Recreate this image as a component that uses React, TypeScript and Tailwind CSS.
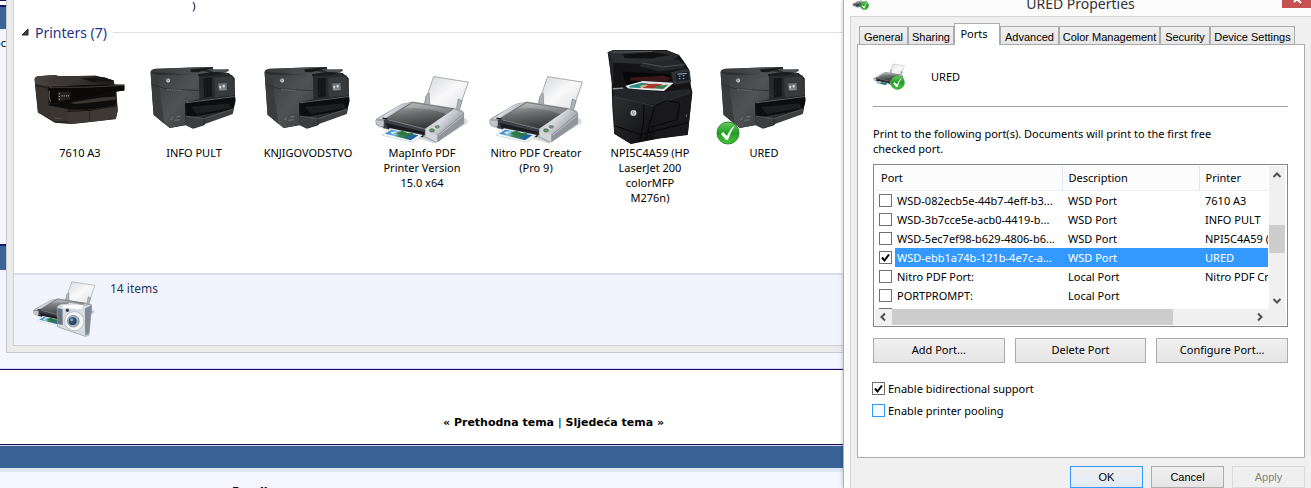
import React, { useState } from 'react';

interface Device {
  name: string;
  icon: React.ReactNode;
  isDefault?: boolean;
}

interface Port {
  port: string;
  description: string;
  printer: string;
}

const HpLogo: React.FC<{ x: number; y: number; r: number }> = ({ x, y, r }) => (
  <g>
    <circle cx={x} cy={y} r={r} fill="#d5d8da" />
    <path d={`M${x - 1} ${y - r + 1}l-3 ${r * 1.3}M${x + 3} ${y - 3}l-3 ${r}`} stroke="#3d3f41" strokeWidth="1.5" />
  </g>
);

const WidePrinter: React.FC = () => (
  <svg viewBox="104 218 276 154" className="h-[51px] w-[92px]" aria-hidden="true">
    <defs>
      <linearGradient id="wideTop" x1="0" y1="0" x2="1" y2="0">
        <stop offset="0" stopColor="#4a4542" />
        <stop offset="0.6" stopColor="#332f2c" />
        <stop offset="1" stopColor="#1b1817" />
      </linearGradient>
    </defs>
    <path d="M105 234Q106 226 116 225L165 221L180 225L290 223L344 238L346 250L376 251L376 268L352 269L356 328L350 354L272 363L214 369L166 365L115 334L112 300Z" fill="#25211f" />
    <path d="M105 234Q106 226 116 225L165 221L180 225L290 223L344 238L330 250L146 256L106 248Z" fill="url(#wideTop)" />
    <path d="M182 226l86-1-40 16-62 4-26-4Z" fill="#3b3734" />
    <path d="M244 231l72-3 26 10-60 5Z" fill="#171413" />
    <path d="M106 249L146 258V312L148 350L115 334L110 290Z" fill="#38332f" />
    <path d="M106 252l38 8" stroke="#151312" strokeWidth="2" />
    <path d="M145 257L250 252L376 250V268L346 272L310 280L214 303L152 307Q143 282 145 257Z" fill="#0b0a09" />
    <path d="M148 258L260 258L374 252" stroke="#5c5753" strokeWidth="2" fill="none" />
    <path d="M149 268q-3 18 4 33" stroke="#726c66" strokeWidth="3" fill="none" />
    <path d="M174 272l38-1v24l-36 6Z" fill="#23201e" />
    <path d="M178 278h3M178 286h3M178 294h3M187 284h3M193 284h3M200 284h3M206 284h3" stroke="#d2ccc5" strokeWidth="3" />
    <path d="M150 308L214 304L310 280L350 272V316L270 326L150 322Z" fill="#0f0d0c" />
    <path d="M214 304l86-14 50-4v10l-124 13Z" fill="#39352f" />
    <path d="M145 312L205 324V360L166 362L148 350Z" fill="#3a3531" />
    <path d="M202 330L270 326L354 312L356 328L350 354L272 363L214 369L204 362Z" fill="#3e3935" />
    <path d="M202 331L272 328L354 314" stroke="#191614" strokeWidth="3" fill="none" />
    <path d="M272 332l-1 30" stroke="#1d1a18" strokeWidth="2" />
    <path d="M164 350l22 3" stroke="#6b655f" strokeWidth="2" />
  </svg>
);

const OfficePrinter: React.FC = () => (
  <svg viewBox="449 192 264 196" className="h-[65px] w-[88px]" aria-hidden="true">
    <defs>
      <linearGradient id="officeFront" x1="0" y1="0" x2="1" y2="1">
        <stop offset="0" stopColor="#3b3d3e" />
        <stop offset="0.5" stopColor="#505254" />
        <stop offset="1" stopColor="#38393b" />
      </linearGradient>
      <linearGradient id="officeTop" x1="0" y1="0" x2="1" y2="0">
        <stop offset="0" stopColor="#36383a" />
        <stop offset="1" stopColor="#56595b" />
      </linearGradient>
    </defs>
    <path d="M450 214Q450 205 464 203L575 200L638 198L640 214L686 216L700 230L706 296L700 326L614 366L612 374L578 384L556 374L508 382L459 342Z" fill="#2b2c2e" />
    <path d="M450 212l14-8 112-5 60-1-32 12 40 8-50 6Z" fill="url(#officeTop)" />
    <path d="M470 222L596 220L598 294L554 306L556 372L508 382L488 366Z" fill="url(#officeFront)" />
    <path d="M450 214L472 222L478 268L492 370L459 342Z" fill="#3a3c3e" />
    <path d="M452 250l44 14 100 5" stroke="#242526" strokeWidth="2" fill="none" />
    <path d="M570 205l68-7-18 9-28 7-20-1Z" fill="#191a1b" />
    <path d="M592 220l92-15 2 4-30 13-60 6Z" fill="#1b1c1d" />
    <path d="M620 205h65l-6 10-40-3Z" fill="#505355" />
    <path d="M596 225l100-2 8 10v58l-106 4Z" fill="#28292b" />
    <path d="M610 233l24-2v55l-22 4Z" fill="#111213" />
    <path d="M617 236v48M626 235v48" stroke="#2b2d2e" strokeWidth="2" />
    <path d="M642 230l56-3 6 56-60 6Z" fill="#37393b" />
    <path d="M654 248l25-2 2 22-25 2Z" fill="#6f7477" />
    <path d="M658 255h4v7h-4zM668 253h5v6h-5zM659 265h16" fill="#e4e6e7" stroke="#dfe1e2" strokeWidth="1" />
    <path d="M554 306l150-21 2 16-6 26-144 24Z" fill="#0c0d0e" />
    <path d="M556 306l148-19" stroke="#5c5f61" strokeWidth="3" />
    <path d="M572 318l114-10 10 14-106 18Z" fill="#1d1e20" />
    <path d="M556 346L612 352L702 322L698 340L614 370L578 382L556 372Z" fill="#3b3d3f" />
    <path d="M556 346l56 8 88-30" stroke="#5e6163" strokeWidth="2" fill="none" />
    <path d="M611 354l1 18" stroke="#18191a" strokeWidth="2" />
    <path d="M500 266l44 2" stroke="#8a8d90" strokeWidth="2" strokeDasharray="5 2" />
    <path d="M512 351h5M510 356h5M528 349l12-2M522 359l16-2" stroke="#8b8e90" strokeWidth="2" />
    <HpLogo x={503} y={239} r={6} />
  </svg>
);

const LaserPrinter: React.FC = () => (
  <svg viewBox="400 26 264 290" className="h-[96px] w-[88px]" aria-hidden="true">
    <defs>
      <linearGradient id="laserFront" x1="0" y1="0" x2="1" y2="1">
        <stop offset="0" stopColor="#303133" />
        <stop offset="1" stopColor="#0d0d0f" />
      </linearGradient>
    </defs>
    <path d="M404 36L422 29H582L620 44L636 66L650 88L656 140L660 156L654 210L646 286L560 296L474 313L424 282L418 200L416 120Z" fill="#141416" />
    <path d="M404 36l18-7 160 2 38 14-22 18-66 10-112-6Z" fill="#2c2d30" />
    <path d="M450 42l90-6 56 7-60 12-80-2Z" fill="#101012" />
    <path d="M420 36l120-3" stroke="#5a5c60" strokeWidth="3" />
    <path d="M408 40l14 26-2 76-6-30Z" fill="#242527" />
    <path d="M505 66l110-8 22 15-4 12-72 8-58-14Z" fill="#26272a" />
    <path d="M508 68l64 12 64-7" stroke="#606368" strokeWidth="2" fill="none" />
    <path d="M448 94l146 8v42l-134-6Z" fill="#08080a" />
    <path d="M472 112l100-5 22 6-10 12-112-4Z" fill="#3a1719" />
    <path d="M458 137L510 123L604 128L574 153L466 147Z" fill="#e2e7e7" />
    <path d="M470 138l36-10 22 2-26 14-32-2Z" fill="#268b80" />
    <path d="M516 132l38-1 18 2-28 12-34-1Z" fill="#a53a30" />
    <path d="M552 138l36-5-16 14-26-2Z" fill="#377f48" />
    <path d="M500 138l20-5 6 4-18 6Z" fill="#d6ad7e" />
    <path d="M596 96l44-10 12 6 4 34-52 8Z" fill="#303236" />
    <path d="M610 99l38-4 3 25-38 4Z" fill="#141c25" />
    <path d="M615 102l28-2M619 108h5M631 107h5M619 116h5M631 115h5" stroke="#9eb2be" strokeWidth="3" />
    <path d="M420 145L452 143L562 157L650 145L656 157L546 195L444 178L422 168Z" fill="#242528" />
    <path d="M420 168L545 197V298L474 312L424 282Z" fill="url(#laserFront)" />
    <path d="M545 197L659 157L654 210L646 284L545 298Z" fill="#19191c" />
    <path d="M422 170l122 28 112-41" stroke="#3c3e42" strokeWidth="2" fill="none" />
    <path d="M514 194l-2 58-12 54M546 200l-12 40-14 60M424 258l80 26 142-35M546 198L584 182L622 190L612 240L536 262" stroke="#050506" strokeWidth="3" fill="none" />
    <path d="M420 146l31-2" stroke="#8f9497" strokeWidth="4" />
    <path d="M642 224v7" stroke="#777a7e" strokeWidth="3" />
    <HpLogo x={482} y={219} r={9} />
  </svg>
);

const InkPrinter: React.FC<{ className: string }> = ({ className }) => (
  <svg viewBox="362 98 296 216" className={className} aria-hidden="true">
    <defs>
      <linearGradient id="paper" x1="0" y1="0" x2="1" y2="1">
        <stop offset="0" stopColor="#d4d6d8" />
        <stop offset="0.5" stopColor="#f9f9fa" />
        <stop offset="1" stopColor="#dadcde" />
      </linearGradient>
      <linearGradient id="glass" x1="0.2" y1="0" x2="0.5" y2="1">
        <stop offset="0" stopColor="#b0b1b3" />
        <stop offset="0.45" stopColor="#6b6c6e" />
        <stop offset="1" stopColor="#333436" />
      </linearGradient>
      <linearGradient id="silver" x1="0" y1="0" x2="1" y2="0.6">
        <stop offset="0" stopColor="#979da3" />
        <stop offset="0.5" stopColor="#d9dde1" />
        <stop offset="1" stopColor="#858a90" />
      </linearGradient>
      <linearGradient id="photo" x1="0" y1="0" x2="1" y2="0.3">
        <stop offset="0" stopColor="#1268b5" />
        <stop offset="0.4" stopColor="#83bfe3" />
        <stop offset="0.55" stopColor="#3b8548" />
        <stop offset="1" stopColor="#1d5faa" />
      </linearGradient>
    </defs>
    <path d="M370 258l180 51 102-64-6-14-100 44Z" fill="#c5c7c9" opacity="0.7" />
    <path d="M546 103l107 17-31 89-107-17Z" fill="url(#paper)" stroke="#a5a8ab" strokeWidth="3" />
    <path d="M518 191l4-28 10-10 2 38M616 204l6-32 12 6-9 29Z" fill="#adb2b7" stroke="#7c8288" strokeWidth="2" />
    <path d="M366 240q0-7 10-12l72-41 35-7 135 21q22 6 22 15v32l-82 57q-7 2-14-2l-26-12-144-35q-8-4-8-16Z" fill="#9ea4aa" />
    <path d="M368 238l80-50 30-6-84 50 0 12Z" fill="url(#silver)" />
    <path d="M400 233l80-50 128 20-88 61Z" fill="url(#glass)" stroke="#54575a" strokeWidth="2" />
    <path d="M482 184l126 19-23 16q-66-25-131-17Z" fill="#fff" opacity="0.2" />
    <path d="M520 264l88-60 30 11-78 67-42-10Z" fill="url(#silver)" />
    <path d="M518 268l40 14-2 23-38-18Z" fill="#d2d6d9" />
    <path d="M558 282l81-66v32l-81 57Z" fill="#8f959b" />
    <path d="M562 284l74-60" stroke="#d6dadd" strokeWidth="2" />
    <path d="M370 236l28-1 122 31v19l-128-23Z" fill="#3c3f43" />
    <path d="M366 238l26 0 0 20-18-5Z" fill="#c2c7cc" />
    <path d="M388 231l16 3" stroke="#101113" strokeWidth="4" />
    <path d="M398 246l120 28-5 16-106-20Z" fill="#191b1e" />
    <path d="M386 284l25-22 101 21-29 23Z" fill="#f4f7f9" stroke="#8da2b1" strokeWidth="1" />
    <path d="M396 279l20-13 83 18-23 15Z" fill="url(#photo)" />
    <path d="M430 278l20-8 15 8 20-1-18 11Z" fill="#2c7641" />
    <path d="M411 275l22-3-13 8Z" fill="#e6f4fa" />
    <ellipse cx="541" cy="269" rx="8" ry="5" fill="#5c9d61" stroke="#49544d" strokeWidth="2" />
    <ellipse cx="557" cy="258" rx="7" ry="4" fill="#7b9982" stroke="#5a6660" strokeWidth="2" />
  </svg>
);

const Camera: React.FC<{ className: string }> = ({ className }) => (
  <svg viewBox="168 188 110 106" className={className} aria-hidden="true">
    <path d="M172 201l12-7 18 0 8-5 27 4 6 6 32-4 1 12-8 82-11 3-84-29Z" fill="#d7dce1" stroke="#8b949e" strokeWidth="2" />
    <path d="M256 208l20-10-7 85-12 7Z" fill="#7e8995" />
    <path d="M173 206l15 4 1 48-16-3Z" fill="#697481" />
    <path d="M190 196h62l-7 14-56-4Z" fill="#fbfcfd" />
    <circle cx="224" cy="246" r="29" fill="#f4f6f8" stroke="#a3adb7" strokeWidth="2" />
    <circle cx="221" cy="246" r="18" fill="#a3b1be" stroke="#7c8b9b" strokeWidth="2" />
    <circle cx="219" cy="246" r="12" fill="#2c4a68" />
    <circle cx="216" cy="242" r="5" fill="#7ba5c6" />
    <circle cx="203" cy="213" r="5" fill="#333b45" />
  </svg>
);

const CheckBadge: React.FC<{ className: string }> = ({ className }) => (
  <svg viewBox="0 0 24 24" className={className} aria-hidden="true">
    <defs>
      <linearGradient id="badge" x1="0" y1="0" x2="0" y2="1">
        <stop offset="0" stopColor="#6ccb63" />
        <stop offset="0.5" stopColor="#229d26" />
        <stop offset="1" stopColor="#4ac33a" />
      </linearGradient>
    </defs>
    <circle cx="12" cy="12" r="11" fill="url(#badge)" stroke="#2b8a2c" strokeWidth="1" />
    <path d="M5 13l2-2 4 4q3-7 8-11-4 6-7 15h-2Z" fill="#fff" />
  </svg>
);

const devices: Device[] = [
  { name: '7610 A3', icon: <div className="pb-[20px]"><WidePrinter /></div> },
  { name: 'INFO PULT', icon: <div className="pb-[15px]"><OfficePrinter /></div> },
  { name: 'KNJIGOVODSTVO', icon: <div className="pb-[15px]"><OfficePrinter /></div> },
  { name: 'MapInfo PDF\nPrinter Version\n15.0 x64', icon: <InkPrinter className="h-[70px] w-[96px]" /> },
  { name: 'Nitro PDF Creator\n(Pro 9)', icon: <InkPrinter className="h-[70px] w-[96px]" /> },
  { name: 'NPI5C4A59 (HP\nLaserJet 200\ncolorMFP\nM276n)', icon: <LaserPrinter /> },
  { name: 'URED', icon: <div className="pb-[15px]"><OfficePrinter /></div>, isDefault: true },
];

const ports: Port[] = [
  { port: 'WSD-082ecb5e-44b7-4eff-b3...', description: 'WSD Port', printer: '7610 A3' },
  { port: 'WSD-3b7cce5e-acb0-4419-b...', description: 'WSD Port', printer: 'INFO PULT' },
  { port: 'WSD-5ec7ef98-b629-4806-b6...', description: 'WSD Port', printer: 'NPI5C4A59 (HP LaserJet 200)' },
  { port: 'WSD-ebb1a74b-121b-4e7c-a...', description: 'WSD Port', printer: 'URED' },
  { port: 'Nitro PDF Port:', description: 'Local Port', printer: 'Nitro PDF Creator (Pro 9)' },
  { port: 'PORTPROMPT:', description: 'Local Port', printer: '' },
  { port: '', description: '', printer: '' },
];

const tabs = [
  { name: 'General', width: 'w-[49px]' },
  { name: 'Sharing', width: 'w-[46px]' },
  { name: 'Ports', width: 'w-[46px]' },
  { name: 'Advanced', width: 'w-[59px]' },
  { name: 'Color Management', width: 'w-[101px]' },
  { name: 'Security', width: 'w-[50px]' },
  { name: 'Device Settings', width: 'w-[85px]' },
];

interface CheckBoxProps {
  id: string;
  checked: boolean;
  onChange: () => void;
  label?: string;
  hot?: boolean;
}

const CheckBox: React.FC<CheckBoxProps> = ({ id, checked, onChange, label, hot }) => (
  <span className="relative block size-[13px] shrink-0">
    <input
      id={id}
      type="checkbox"
      checked={checked}
      onChange={onChange}
      aria-label={label}
      className={`block size-[13px] appearance-none border ${hot ? 'border-[#3399ff] bg-[#f3f9ff]' : 'border-[#707070] bg-white'}`}
    />
    {checked && (
      <svg viewBox="0 0 13 13" className="pointer-events-none absolute inset-0 size-[13px]">
        <path d="M3 6.5l2.5 3L10 3.5" stroke="#000" strokeWidth="2" fill="none" />
      </svg>
    )}
  </span>
);

const Chevron: React.FC<{ d: string }> = ({ d }) => (
  <svg viewBox="0 0 16 16" className="size-4">
    <path d={d} stroke="#505050" strokeWidth="2" fill="none" />
  </svg>
);

const buttonStyle = 'border border-[#acacac] bg-linear-to-b from-[#f0f0f0] to-[#e5e5e5] text-center';

const Explorer: React.FC = () => (
  <div className="flex min-w-0 flex-1 flex-col border-b border-l border-[#c9c9cb] bg-[#ebebeb] pb-[6px] pl-[6px]">
    <div className="flex flex-col border-b border-l border-[#d0d0d3] bg-white">
      <div className="grid h-[21px] grid-cols-[repeat(7,114px)] pl-[9px] text-center leading-[12px]">
        <span className="col-start-2">)</span>
      </div>
      <div className="flex h-[22px] items-center pl-[8px]">
        <svg viewBox="0 0 7 7" className="size-[7px]"><path d="M6 0v6H0Z" fill="#404040" stroke="#222" strokeWidth="1" /></svg>
        <h2 className="ml-[6px] text-[14px] text-[#1e3287]">Printers (7)</h2>
        <div className="ml-[6px] h-px flex-1 bg-[#e0e0e0]" />
      </div>
      <div className="grid h-[230px] grid-cols-[repeat(7,114px)] pt-[5px] pl-[9px]">
        {devices.map((device) => (
          <div key={device.name} className="flex flex-col items-center">
            <div className="relative flex h-[97px] items-end">
              {device.icon}
              {device.isDefault && <CheckBadge className="absolute bottom-0 -left-1 size-[24px]" />}
            </div>
            <p className="text-center leading-[15px] whitespace-pre">{device.name}</p>
          </div>
        ))}
      </div>
      <div className="flex h-[72px] border-t-2 border-[#d5dfe9] bg-[#f1f4fc] pt-[5px] pl-[18px] text-[#1e395b]">
        <div className="relative mr-[14px] h-[60px] w-[64px]">
          <InkPrinter className="h-[48px] w-[64px]" />
          <Camera className="absolute right-[3px] bottom-[3px] h-[35px] w-[38px]" />
        </div>
        <p className="pt-[1px] text-[12px] leading-[15px]">14 items</p>
      </div>
    </div>
  </div>
);

const Forum: React.FC = () => (
  <div className="min-w-0 flex-1 bg-[#f5f5ff]">
    <div className="flex">
      <div className="w-[6px] shrink-0 overflow-hidden">
        <div className="h-[7px] border-t border-b-2 border-[#1b1464] bg-white" />
        <div className="h-[22px] bg-[#3a6398]" />
        <div className="flex h-[215px] justify-end pt-[6px] leading-[15px]">oc</div>
        <div className="h-[2px] bg-[#1b1464]" />
        <div className="h-[24px] bg-[#3a6398]" />
      </div>
      <Explorer />
    </div>
    <div className="h-[16px] border-b border-[#d5d5ff]" />
    <div className="h-[76px] border-y border-[#14105c] bg-white pt-[45px] pl-[265px] text-center font-['DejaVu_Sans'] text-[11px] leading-[15px] font-bold">
      <nav className="mr-[1px]">
        « <a href="#prev">Prethodna tema</a> <span className="font-normal">|</span> <a href="#next">Sljedeća tema</a> »
      </nav>
    </div>
    <div className="h-[23px] border-t border-[#d5d5ff] bg-[#3a6398]" />
    <div className="h-[4px] bg-[#dde8f3]" />
    <p className="pt-[12px] pl-[232px] font-['DejaVu_Sans'] text-[11px] leading-[15px] font-bold">Pravila</p>
  </div>
);

const PropertiesDialog: React.FC = () => {
  const [activeTab, setActiveTab] = useState('Ports');
  const [checkedPort, setCheckedPort] = useState(3);
  const [bidirectional, setBidirectional] = useState(true);
  const [pooling, setPooling] = useState(false);

  return (
    <section className="flex w-[468px] shrink-0 flex-col border-l border-[#b0b0b0] bg-[#fcfcfc] pl-[6px] shadow-[-1px_0_3px_#0000002a]">
      {/* Title bar */}
      <div className="relative h-[17px] overflow-hidden pb-[10px]">
        <div className="absolute -top-1 left-[2px] h-[14px] w-[17px]">
          <InkPrinter className="h-[13px] w-[16px]" />
          <CheckBadge className="absolute right-0 bottom-0 size-[9px]" />
        </div>
        <h1 className="flex h-full items-center justify-center text-[14px] text-[#333]">URED Properties</h1>
        <button aria-label="Close" className="absolute top-0 right-0 h-[8px] w-[29px] overflow-hidden bg-[#c75050]">
          <svg viewBox="0 0 29 8" className="h-[8px] w-[29px]"><path d="M12 2l3-3 4 4M12 2l3-4" stroke="#fff" strokeWidth="2" fill="none" /></svg>
        </button>
      </div>

      <div className="flex flex-1 flex-col border-t border-l border-[#d4d4d4] bg-[#f0f0f0] pt-[8px] pr-[6px] pl-[6px]">
        {/* Tabs */}
        <div role="tablist" className="flex h-[19px] items-end pl-[2px] font-['Liberation_Sans'] text-[11px]">
          {tabs.map((tab) => (
            <button
              key={tab.name}
              role="tab"
              aria-selected={activeTab === tab.name}
              onClick={() => setActiveTab(tab.name)}
              className={`${tab.width} shrink-0 border border-b-0 border-[#acacac] whitespace-nowrap ${
                activeTab === tab.name
                  ? "relative -mb-px h-[22px] bg-white pr-[6px] font-['Noto_Sans']"
                  : 'h-[18px] bg-linear-to-b from-[#f0f0f0] to-[#e5e5e5] pt-[2px]'
              }`}
            >
              {tab.name}
            </button>
          ))}
        </div>

        {/* Page */}
        <div className="h-[414px] border border-[#acacac] bg-white pt-[16px] pr-[16px] pl-[15px]">
          <div className="flex h-[46px] border-b border-[#a0a0a0]">
            <div className="relative h-[32px] w-[58px]">
              <InkPrinter className="h-[28px] w-[32px]" />
              <CheckBadge className="absolute top-[14px] left-[17px] size-[15px]" />
            </div>
            <p className="pt-[8px] leading-[15px]">URED</p>
          </div>
          <p className="pt-[19px] leading-[15px]">
            Print to the following port(s). Documents will print to the first free
            <br />
            checked port.
          </p>

          <div className="mt-[8px] h-[163px] border border-[#828790] p-px">
            <div className="flex h-[143px]">
              <div className="min-w-0 flex-1 overflow-hidden">
                <table className="w-full table-fixed border-collapse text-left whitespace-nowrap">
                  <thead>
                    <tr className="h-[24px] border-b border-[#edf2fa] bg-[#fcfcfd]">
                      <th className="w-[187px] border-r border-[#dfe7f5] pl-[6px] font-normal">Port</th>
                      <th className="w-[137px] border-r border-[#dfe7f5] pl-[6px] font-normal">Description</th>
                      <th className="pl-[6px] font-normal">Printer</th>
                    </tr>
                  </thead>
                  <tbody>
                    {ports.map((row, index) => {
                      const selected = index === 3;
                      const cell = selected ? 'bg-[#3399ff] text-white' : '';

                      return (
                        <tr key={index} className="h-[19px] leading-[19px]">
                          <td className="p-0">
                            <div className="flex h-[19px] items-center pl-[4px]">
                              <CheckBox
                                id={`port-${index}`}
                                label={row.port || 'Port'}
                                checked={checkedPort === index}
                                onChange={() => setCheckedPort(index)}
                              />
                              <label htmlFor={`port-${index}`} className={`ml-[3px] h-[19px] flex-1 pl-[2px] ${cell}`}>{row.port}</label>
                            </div>
                          </td>
                          <td className={`p-0 pl-[6px] ${cell}`}>{row.description}</td>
                          <td className={`overflow-hidden p-0 pl-[6px] ${cell}`}>{row.printer}</td>
                        </tr>
                      );
                    })}
                  </tbody>
                </table>
              </div>
              <div className="mr-px ml-px flex w-[16px] flex-col bg-[#f0f0f0]">
                <button aria-label="Scroll up" className="h-[17px]"><Chevron d="M4.500 10L8 6.500L11.500 10" /></button>
                <div className="mt-[42px] h-[28px] bg-[#cdcdcd]" />
                <button aria-label="Scroll down" className="mt-auto h-[17px]"><Chevron d="M4.500 6L8 9.500L11.500 6" /></button>
              </div>
            </div>
            <div className="flex h-[16px] bg-[#f0f0f0] pr-[17px]">
              <button aria-label="Scroll left" className="w-[17px]"><Chevron d="M10 4.500L6.500 8L10 11.500" /></button>
              <div className="flex-1"><div className="h-full w-[78%] bg-[#cdcdcd]" /></div>
              <button aria-label="Scroll right" className="w-[17px]"><Chevron d="M6 4.500L9.500 8L6 11.500" /></button>
            </div>
          </div>

          <div className="mt-[11px] grid h-[25px] grid-cols-3 gap-[10px]">
            <button className={buttonStyle}>Add Port...</button>
            <button className={buttonStyle}>Delete Port</button>
            <button className={buttonStyle}>Configure Port...</button>
          </div>

          <div className="mt-[18px] -ml-px flex flex-col gap-[7px] leading-[15px]">
            <div className="flex items-center gap-[3px]">
              <CheckBox id="bidi" checked={bidirectional} onChange={() => setBidirectional(!bidirectional)} />
              <label htmlFor="bidi">Enable bidirectional support</label>
            </div>
            <div className="flex items-center gap-[3px]">
              <CheckBox id="pooling" checked={pooling} onChange={() => setPooling(!pooling)} hot />
              <label htmlFor="pooling">Enable printer pooling</label>
            </div>
          </div>
        </div>

        <div className="mt-[8px] flex justify-end gap-[8px] font-['Liberation_Sans'] text-[11px]">
          <button className="h-[22px] w-[73px] border border-[#3399ff] bg-linear-to-b from-[#f0f0f0] to-[#e0eaf5]">OK</button>
          <button className={`h-[22px] w-[73px] ${buttonStyle}`}>Cancel</button>
          <button disabled className="h-[22px] w-[73px] border border-[#d9d9d9] bg-[#efefef] text-[#838383]">Apply</button>
        </div>
      </div>
    </section>
  );
};

const App: React.FC = () => {
  return (
    <div className="flex h-screen overflow-hidden bg-white font-['Noto_Sans',sans-serif] text-[11px] text-black">
      <Forum />
      <PropertiesDialog />
    </div>
  );
};

export default App;
